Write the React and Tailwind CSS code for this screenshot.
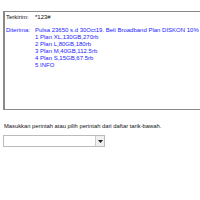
export default function App() {
  const lines = [
    '1 Plan XL,130GB,270rb',
    '2 Plan L,80GB,180rb',
    '3 Plan M,40GB,112.5rb',
    '4 Plan S,15GB,67.5rb',
    '5 INFO',
  ]

  return (
    <div className="w-[200px] h-[200px] bg-white overflow-hidden" style={{ fontFamily: '"Liberation Sans", Arial, sans-serif' }}>
      <div className="pt-[11px] pl-[3px]">
        <div className="h-[99px] w-[210px] border-t border-l-2 border-b border-[#8a8a8a] pt-[2px] text-[6px] leading-[7px]">
          <div className="flex text-[#111]">
            <span className="w-[30px] pl-[1px]">Terkirim:</span>
            <span>*123#</span>
          </div>
          <div className="flex mt-[6px] text-[#1a1aff]">
            <span className="w-[30px] pl-[1px]">Diterima:</span>
            <div className="flex flex-col">
              <span>Pulsa 23650 s.d 30Oct19. Beli Broadband Plan DISKON 10%</span>
              {lines.map((l) => (
                <span key={l}>{l}</span>
              ))}
            </div>
          </div>
        </div>
      </div>
      <p className="mt-[13px] pl-[4px] text-[5.8px] leading-[7px] text-[#111]">
        Masukkan perintah atau pilih perintah dari daftar tarik-bawah.
      </p>
      <div className="mt-[5px] ml-[3px] w-[102px] h-[12px] border border-[#bbb] flex justify-end bg-white">
        <div className="w-[9px] h-full border-l border-[#ccc] bg-[#f0f0f0] flex items-center justify-center">
          <svg width="5" height="3" viewBox="0 0 5 3">
            <path d="M0 0 L5 0 L2.5 3 Z" fill="#222" />
          </svg>
        </div>
      </div>
    </div>
  )
}
